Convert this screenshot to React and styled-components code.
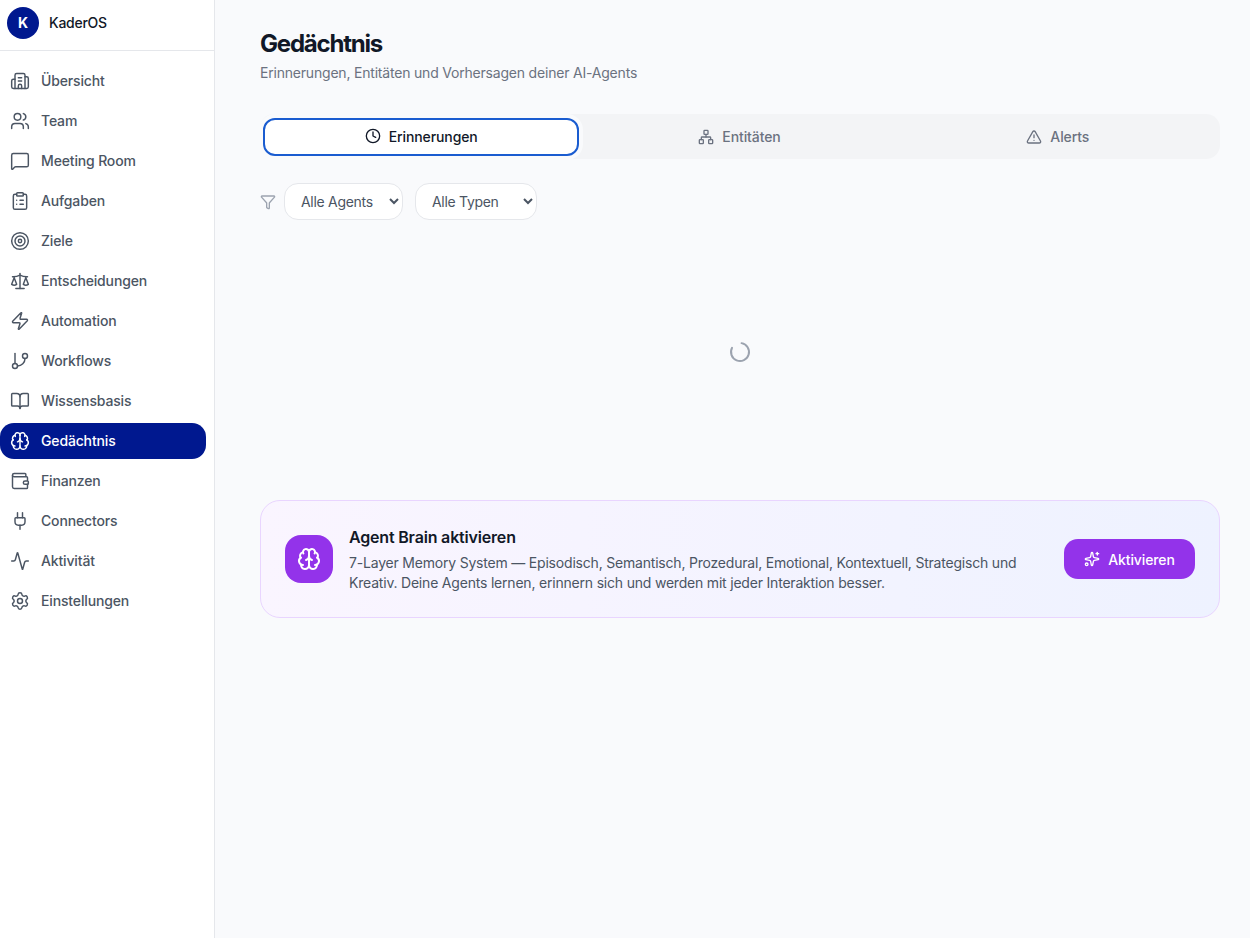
import React from 'react';
import styled, { createGlobalStyle } from 'styled-components';
import {
  Building2, Users, MessageSquare, ClipboardList, Target, Scale, Zap, GitBranch, BookOpen, Brain,
  Wallet, Plug, Activity, Settings, Clock, Network, TriangleAlert, Filter, Sparkles, LoaderCircle,
} from 'lucide-react';

const Global = createGlobalStyle`
  html, body { margin: 0; padding: 0; height: 100%; }
  body { font-family: Inter, "Liberation Sans", sans-serif; background: #f9fafc; color: #111827; }
  #root { height: 100%; }
  * { box-sizing: border-box; }
`;

const Page = styled.div`
  display: flex;
  width: 1250px;
  height: 938px;
  overflow: hidden;
`;

const Sidebar = styled.aside`
  width: 215px;
  flex: none;
  background: #ffffff;
  border-right: 1px solid #e5e7eb;
  display: flex;
  flex-direction: column;
`;

const Brand = styled.div`
  height: 51px;
  flex: none;
  display: flex;
  align-items: center;
  gap: 10px;
  padding: 0 7px 5px;
  border-bottom: 1px solid #e5e7eb;
`;

const Logo = styled.div`
  width: 32px;
  height: 32px;
  border-radius: 50%;
  background: #00188f;
  color: #fff;
  display: flex;
  align-items: center;
  justify-content: center;
  font-size: 14px;
  font-weight: 700;
`;

const BrandName = styled.span`
  font-size: 14px;
  font-weight: 500;
  letter-spacing: -0.25px;
  color: #111827;
`;

const Nav = styled.nav`
  display: flex;
  flex-direction: column;
  gap: 4px;
  padding: 12px 8px 0 0;
`;

const NavItem = styled.div`
  height: 36px;
  display: flex;
  align-items: center;
  gap: 11px;
  padding: 0 0 2px 10px;
  border-radius: 14px;
  font-size: 14px;
  font-weight: 500;
  letter-spacing: -0.15px;
  color: ${(p) => (p.$active ? '#ffffff' : '#4b5563')};
  background: ${(p) => (p.$active ? '#00188f' : 'transparent')};

  & > svg {
    margin-top: 2px;
  }
`;

const Main = styled.main`
  flex: 1;
  min-width: 0;
  padding: 32px 30px 0 45px;
`;

const Title = styled.h1`
  margin: 0;
  font-size: 24px;
  line-height: 24px;
  font-weight: 700;
  letter-spacing: -1.2px;
  color: #111827;
`;

const Subtitle = styled.p`
  margin: 7px 0 0;
  font-size: 14px;
  line-height: 20px;
  letter-spacing: -0.2px;
  color: #6b7280;
`;

const Tabs = styled.div`
  margin-top: 31px;
  height: 45px;
  border-radius: 14px;
  background: #f3f4f6;
  display: grid;
  grid-template-columns: repeat(3, 1fr);
  padding: 4px 3px 3px 2px;
`;

const Tab = styled.div`
  margin: 0 1px;
  padding-bottom: ${(p) => (p.$active ? '2px' : '1px')};
  display: flex;
  align-items: center;
  justify-content: center;
  gap: 8px;
  font-size: 14px;
  font-weight: 500;
  letter-spacing: -0.1px;
  border-radius: 12px;
  color: ${(p) => (p.$active ? '#111827' : '#6b7280')};
  background: ${(p) => (p.$active ? '#ffffff' : 'transparent')};
  border: ${(p) => (p.$active ? '2px solid #1a5cd0' : '0')};
  box-shadow: ${(p) => (p.$active ? '0 0 0 4px #f9fafc' : 'none')};
`;

const Filters = styled.div`
  margin-top: 24px;
  display: flex;
  align-items: center;
  gap: 12px;
`;

const FilterGroup = styled.div`
  display: flex;
  align-items: center;
  gap: 8px;
`;

const FilterIcon = styled(Filter)`
  color: #9ca3af;
`;

const Select = styled.select`
  height: 37px;
  width: ${(p) => p.$w}px;
  padding: 0 4px 0 12px;
  border: 1px solid #e5e7eb;
  border-radius: 14px;
  background-color: #ffffff;
  font-family: inherit;
  font-size: 14px;
  letter-spacing: -0.3px;
  color: #4b5563;
`;

const LoaderArea = styled.div`
  height: 280px;
  padding-bottom: 16px;
  display: flex;
  align-items: center;
  justify-content: center;
`;

const Spinner = styled(LoaderCircle)`
  color: #9ca3af;
  transform: rotate(-80deg);
`;

const Card = styled.section`
  height: 118px;
  border: 1px solid #e9d5ff;
  border-radius: 20px;
  background: linear-gradient(to right, #faf5ff, #eef2ff);
  display: flex;
  align-items: center;
  gap: 16px;
  padding: 0 24px;
`;

const CardIcon = styled.div`
  width: 48px;
  height: 48px;
  flex: none;
  border-radius: 16px;
  background: #9333ea;
  color: #fff;
  display: flex;
  align-items: center;
  justify-content: center;
`;

const CardBody = styled.div`
  flex: 1;
  min-width: 0;
`;

const CardTitle = styled.h3`
  margin: 0 0 4px;
  font-size: 16px;
  line-height: 24px;
  font-weight: 600;
  letter-spacing: -0.18px;
  color: #111827;
`;

const CardText = styled.p`
  margin: 0;
  max-width: 680px;
  font-size: 14px;
  line-height: 20px;
  letter-spacing: -0.2px;
  color: #4b5563;
`;

const ActivateButton = styled.button`
  height: 40px;
  flex: none;
  width: 131px;
  border: 0;
  border-radius: 14px;
  background: #9333ea;
  color: #fff;
  font-family: inherit;
  font-size: 14px;
  font-weight: 500;
  letter-spacing: -0.1px;
  display: flex;
  align-items: center;
  justify-content: center;
  gap: 8px;
`;

const items = [
  ['Übersicht', Building2], ['Team', Users], ['Meeting Room', MessageSquare], ['Aufgaben', ClipboardList],
  ['Ziele', Target], ['Entscheidungen', Scale], ['Automation', Zap], ['Workflows', GitBranch],
  ['Wissensbasis', BookOpen], ['Gedächtnis', Brain], ['Finanzen', Wallet], ['Connectors', Plug],
  ['Aktivität', Activity], ['Einstellungen', Settings],
];

export default function App() {
  return (
    <Page>
      <Global />
      <Sidebar>
        <Brand>
          <Logo>K</Logo>
          <BrandName>KaderOS</BrandName>
        </Brand>
        <Nav>
          {items.map(([label, Icon]) => (
            <NavItem key={label} $active={label === 'Gedächtnis'}>
              <Icon size={20} strokeWidth={1.75} />
              {label}
            </NavItem>
          ))}
        </Nav>
      </Sidebar>
      <Main>
        <Title>Gedächtnis</Title>
        <Subtitle>Erinnerungen, Entitäten und Vorhersagen deiner AI-Agents</Subtitle>
        <Tabs>
          <Tab $active><Clock size={16} />Erinnerungen</Tab>
          <Tab><Network size={16} />Entitäten</Tab>
          <Tab><TriangleAlert size={16} />Alerts</Tab>
        </Tabs>
        <Filters>
          <FilterGroup>
            <FilterIcon size={16} />
            <Select $w={119}><option>Alle Agents</option></Select>
          </FilterGroup>
          <Select $w={122}><option>Alle Typen</option></Select>
        </Filters>
        <LoaderArea><Spinner size={24} /></LoaderArea>
        <Card>
          <CardIcon><Brain size={24} /></CardIcon>
          <CardBody>
            <CardTitle>Agent Brain aktivieren</CardTitle>
            <CardText>7-Layer Memory System — Episodisch, Semantisch, Prozedural, Emotional, Kontextuell, Strategisch und Kreativ. Deine Agents lernen, erinnern sich und werden mit jeder Interaktion besser.</CardText>
          </CardBody>
          <ActivateButton><Sparkles size={16} />Aktivieren</ActivateButton>
        </Card>
      </Main>
    </Page>
  );
}
